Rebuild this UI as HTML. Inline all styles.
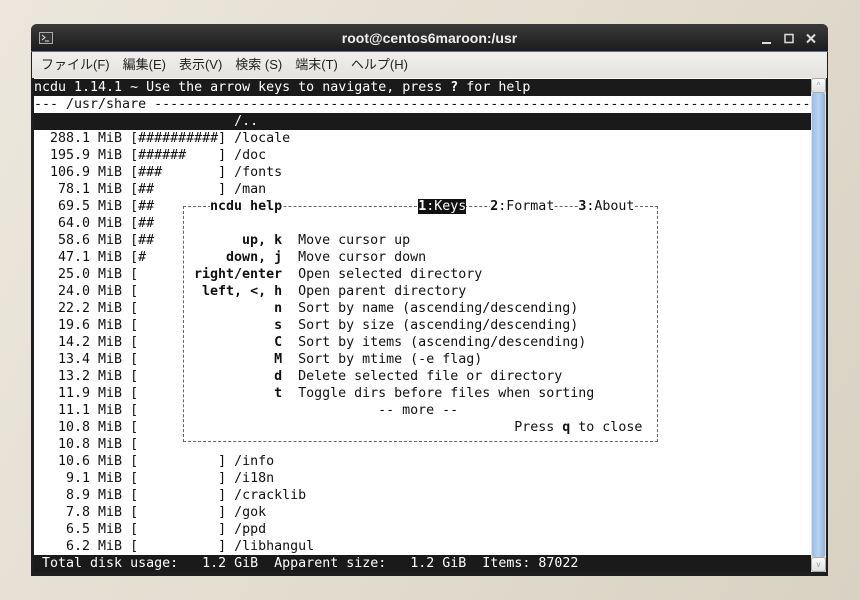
<!DOCTYPE html>
<html><head><meta charset="utf-8"><style>
*{margin:0;padding:0;box-sizing:border-box}
body{width:860px;height:600px;overflow:hidden;background:linear-gradient(120deg,#ece7dc 0%,#e3ddd0 50%,#d9d2c3 100%);position:relative;font-family:"Liberation Sans","Noto Sans CJK JP",sans-serif}
#win{position:absolute;left:31px;top:24px;width:797px;height:552px;background:#1e1e1e;border-radius:6px 6px 0 0}
#title{position:absolute;left:0;top:0;width:797px;height:28px;background:linear-gradient(#3a3a3a,#1c1c1c);border-radius:6px 6px 0 0;border-bottom:1px solid #5a7090;color:#eee;font-weight:bold;font-size:14px;text-align:center;line-height:28px}
#menu{position:absolute;left:1px;top:28px;width:795px;height:26px;background:linear-gradient(#f0efed,#e4e3df);font-size:13px;color:#222;line-height:26px;padding-left:9px;word-spacing:0}
#menu span{margin-right:13px}
#term{position:absolute;left:3px;top:54px;width:777px;height:494px;background:#fff;overflow:hidden}
pre{font-family:"DejaVu Sans Mono","Liberation Mono",monospace;font-size:13.3px;line-height:17px;color:#111;position:absolute;left:0;top:1px;white-space:pre}
.inv{background:#1a1a1a;color:#fff;display:inline-block;width:777px}
#box{position:absolute;left:149px;top:128px;width:475px;height:236px;background:#fff;border:1px dashed #666}
#scroll{position:absolute;left:780px;top:54px;width:15px;height:494px;background:#dfe3e8}
#thumb{position:absolute;left:1px;top:15px;width:13px;height:464px;background:linear-gradient(90deg,#9dbde6,#b9d2f0,#8fb2df);border-radius:2px}
.btn{position:absolute;left:0;width:15px;height:15px;background:linear-gradient(#fbfbfb,#e0e0e0);border:1px solid #aaa;border-radius:3px;font-size:8px;color:#999;text-align:center;line-height:13px}
.w{background:#fff}
</style></head><body>
<div id="win">
<div id="title"><svg style="position:absolute;left:8px;top:8px" width="14" height="12"><rect x="0.5" y="0.5" width="13" height="11" fill="#333" stroke="#aaa"/><path d="M3 3l3 2.5-3 2.5M6 9h4" stroke="#ddd" fill="none"/></svg>root@centos6maroon:/usr
<svg style="position:absolute;left:730px;top:9px" width="60" height="12"><path d="M1 10h9" stroke="#ddd" stroke-width="2"/><rect x="24" y="1.5" width="8" height="8" fill="none" stroke="#ddd" stroke-width="1.5"/><path d="M46 1.5l8 8M54 1.5l-8 8" stroke="#ddd" stroke-width="2"/></svg></div>
<div id="menu"><span>ファイル(F)</span><span>編集(E)</span><span>表示(V)</span><span>検索 (S)</span><span>端末(T)</span><span>ヘルプ(H)</span></div>
<div id="term">
<pre><span class="inv">ncdu 1.14.1 ~ Use the arrow keys to navigate, press <b>?</b> for help</span>
--- /usr/share -----------------------------------------------------------------------------------
<span class="inv">                         /..</span>
  288.1 MiB [##########] /locale
  195.9 MiB [######    ] /doc
  106.9 MiB [###       ] /fonts
   78.1 MiB [##        ] /man
   69.5 MiB [##
   64.0 MiB [##
   58.6 MiB [##
   47.1 MiB [#
   25.0 MiB [
   24.0 MiB [
   22.2 MiB [
   19.6 MiB [
   14.2 MiB [
   13.4 MiB [
   13.2 MiB [
   11.9 MiB [
   11.1 MiB [
   10.8 MiB [
   10.8 MiB [
   10.6 MiB [          ] /info
    9.1 MiB [          ] /i18n
    8.9 MiB [          ] /cracklib
    7.8 MiB [          ] /gok
    6.5 MiB [          ] /ppd
    6.2 MiB [          ] /libhangul
<span class="inv"> Total disk usage:   1.2 GiB  Apparent size:   1.2 GiB  Items: 87022</span></pre>
<div id="box"></div>
<pre style="top:120px;left:144px">
    <span class="w"><b>ncdu help</b></span>                 <span style="background:#111;color:#fff"><b>1</b>:Keys</span>   <span class="w"><b>2</b>:Format</span>   <span class="w"><b>3</b>:About</span>

        <b>up, k</b>  Move cursor up
      <b>down, j</b>  Move cursor down
  <b>right/enter</b>  Open selected directory
   <b>left, &lt;, h</b>  Open parent directory
            <b>n</b>  Sort by name (ascending/descending)
            <b>s</b>  Sort by size (ascending/descending)
            <b>C</b>  Sort by items (ascending/descending)
            <b>M</b>  Sort by mtime (-e flag)
            <b>d</b>  Delete selected file or directory
            <b>t</b>  Toggle dirs before files when sorting
                         -- more --
                                          Press <b>q</b> to close</pre>
</div>
<div id="scroll"><div class="btn" style="top:0">^</div><div id="thumb"></div><div class="btn" style="top:479px">v</div></div>
</div>
</body></html>
